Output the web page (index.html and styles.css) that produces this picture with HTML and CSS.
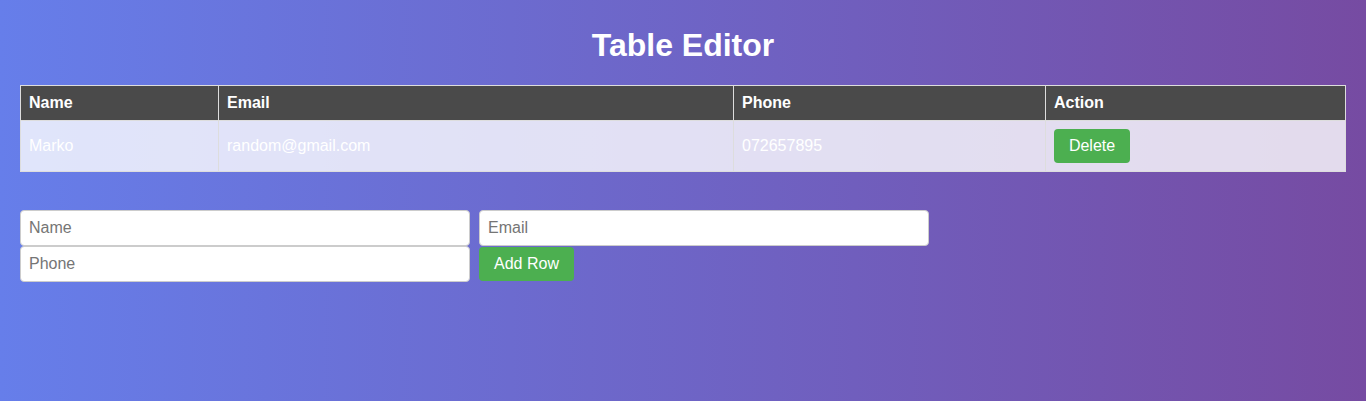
FILE: index.html
```html
<!DOCTYPE html>
<html lang="en">
<head>
<meta charset="utf-8">
<title>Table Editor</title>
<link rel="stylesheet" href="styles.css">
</head>
<body>
<div class="page">
  <h1 class="title">Table Editor</h1>
  <table class="grid">
    <thead>
      <tr>
        <th class="col-name">Name</th>
        <th class="col-email">Email</th>
        <th class="col-phone">Phone</th>
        <th class="col-action">Action</th>
      </tr>
    </thead>
    <tbody>
      <tr>
        <td>Marko</td>
        <td>random@gmail.com</td>
        <td>072657895</td>
        <td><button class="btn btn-del" type="button">Delete</button></td>
      </tr>
    </tbody>
  </table>
  <form class="entry">
    <input class="field" type="text" placeholder="Name">
    <input class="field" type="email" placeholder="Email">
    <input class="field" type="text" placeholder="Phone">
    <button class="btn btn-add" type="button">Add Row</button>
  </form>
</div>
</body>
</html>
```
FILE: styles.css
```css
html, body {
  margin: 0;
  padding: 0;
  height: 100%;
}
body {
  font-family: "Liberation Sans", Arial, sans-serif;
  font-size: 16px;
  background: linear-gradient(to right, #667eea, #764ba2);
  color: #fff;
}
.page {
  padding: 27px 20px 20px;
}
.title {
  margin: 0 0 21px;
  text-align: center;
  font-size: 32px;
  line-height: 37px;
  font-weight: bold;
  color: #fff;
}
.grid {
  width: 100%;
  border-collapse: collapse;
  background: rgba(255, 255, 255, 0.8);
}
.grid th,
.grid td {
  border: 1px solid #ddd;
  padding: 8px;
  text-align: left;
  line-height: 18px;
}
.grid th {
  background: #4a4a4a;
  color: #fff;
  font-weight: bold;
}
.grid td {
  color: #fff;
}
.col-name { width: 181px; }
.col-email { width: 498px; }
.col-phone { width: 295px; }
.btn {
  font-family: "Liberation Sans", Arial, sans-serif;
  font-size: 16px;
  line-height: 18px;
  padding: 8px 16px;
  border: none;
  border-radius: 4px;
  background: #4caf50;
  color: #fff;
  cursor: pointer;
}
.btn-del {
  width: 76px;
  padding: 8px 0;
  text-align: center;
}
.entry {
  margin-top: 38px;
  display: flex;
  flex-wrap: wrap;
  column-gap: 9px;
  row-gap: 0;
  align-items: flex-start;
}
.field {
  box-sizing: border-box;
  width: 450px;
  height: 36px;
  padding: 8px;
  border: 1px solid #ccc;
  border-radius: 4px;
  font-family: "Liberation Sans", Arial, sans-serif;
  font-size: 16px;
  background: #fff;
  color: #333;
}
.field::placeholder {
  color: #757575;
}
.btn-add {
  margin-top: 1px;
  height: 34px;
  width: 95px;
  padding: 8px 0;
  text-align: center;
}
```
